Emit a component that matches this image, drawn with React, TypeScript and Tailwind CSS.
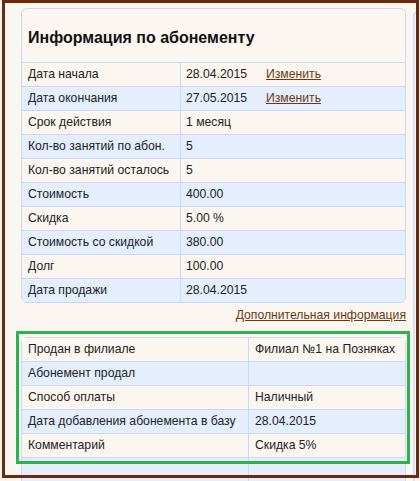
const mainRows: { label: string; value: string; link?: boolean }[] = [
  { label: "Дата начала", value: "28.04.2015", link: true },
  { label: "Дата окончания", value: "27.05.2015", link: true },
  { label: "Срок действия", value: "1 месяц" },
  { label: "Кол-во занятий по абон.", value: "5" },
  { label: "Кол-во занятий осталось", value: "5" },
  { label: "Стоимость", value: "400.00" },
  { label: "Скидка", value: "5.00 %" },
  { label: "Стоимость со скидкой", value: "380.00" },
  { label: "Долг", value: "100.00" },
  { label: "Дата продажи", value: "28.04.2015" },
];

const extraRows = [
  { label: "Продан в филиале", value: "Филиал №1 на Позняках" },
  { label: "Абонемент продал", value: "" },
  { label: "Способ оплаты", value: "Наличный" },
  { label: "Дата добавления абонемента в базу", value: "28.04.2015" },
  { label: "Комментарий", value: "Скидка 5%" },
  { label: "", value: "" },
];

export default function App() {
  return (
    <div
      className="relative w-[420px] h-[481px] overflow-hidden bg-[#fbf7f0] text-[12.2px] text-[#222] whitespace-nowrap"
      style={{ fontFamily: '"Liberation Sans", Arial, sans-serif' }}
    >
      <div className="flex pl-[21px] pt-[8px] h-full">
        <div className="w-[385px] shrink-0">
          {/* main info */}
          <div className="border border-[#c8dafa] rounded-[6px] overflow-hidden">
            <div className="h-[53px] flex items-center px-[6px] pt-[4px] text-[16px] font-bold text-[#111]">
              Информация по абонементу
            </div>
            {mainRows.map((r, i) => (
              <div
                key={r.label}
                className={`flex h-[24px] border-t border-[#c8dafa] ${i % 2 ? "bg-[#e4eefd]" : "bg-[#fbf7f0]"}`}
              >
                <div className="w-[159px] shrink-0 border-r border-[#c8dafa] px-[6px] flex items-center">{r.label}</div>
                <div className="flex-1 px-[5px] flex items-center">
                  <span className="w-[80px]">{r.value}</span>
                  {r.link && <a className="underline text-[#6b3a12] cursor-pointer">Изменить</a>}
                </div>
              </div>
            ))}
          </div>
          <div className="flex justify-end h-[24px] items-center pt-[1px]">
            <a className="underline text-[#6b3a12] cursor-pointer">Дополнительная информация</a>
          </div>

          {/* extra info */}
          <div className="mt-[10px] border border-[#c8dafa] rounded-t-[6px]">
            {extraRows.map((r, i) => (
              <div
                key={i}
                className={`flex ${i ? "h-[24px] border-t border-[#c8dafa]" : "h-[23px]"} ${i % 2 ? "bg-[#e4eefd]" : "bg-[#fbf7f0]"}`}
              >
                <div className="w-[227px] shrink-0 border-r border-[#c8dafa] px-[6px] flex items-center">{r.label}</div>
                <div className="flex-1 px-[6px] flex items-center">{r.value}</div>
              </div>
            ))}
          </div>
        </div>
        <div className="ml-[7px] mt-[2px] flex-1 border-l-2 border-t-2 border-[#d4e1f8] rounded-tl-[6px]" />
      </div>

      {/* annotations */}
      <div className="absolute left-[16px] top-[331px] w-[394px] h-[133px] border-[3px] border-[#2db34b]" />
      <div className="absolute left-[2px] top-0 w-[417px] h-[478px] border-[3px] border-[#6b2a0c]" />
    </div>
  );
}
